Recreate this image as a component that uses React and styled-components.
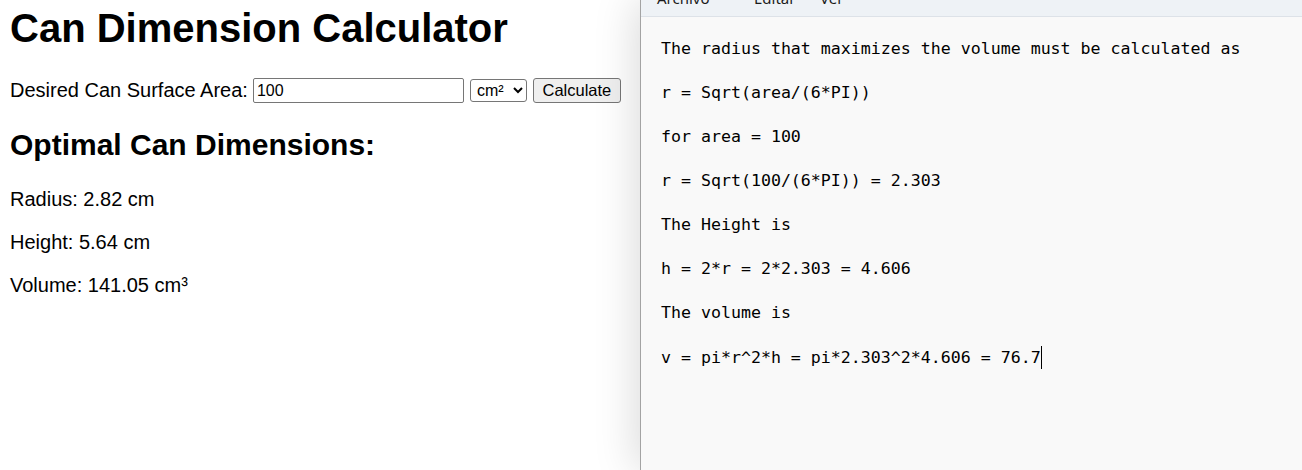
import React from "react";
import styled, { createGlobalStyle } from "styled-components";

const GlobalStyle = createGlobalStyle`
  html, body {
    margin: 0;
    padding: 0;
    background: #fff;
  }
  body {
    font-family: "Liberation Sans", Arial, sans-serif;
    color: #000;
  }
`;

const menu = [
  { label: "Archivo", width: 97 },
  { label: "Editar", width: 66 },
  { label: "Ver", width: 40 },
];

const notes = [
  "The radius that maximizes the volume must be calculated as",
  "r = Sqrt(area/(6*PI))",
  "for area = 100",
  "r = Sqrt(100/(6*PI)) = 2.303",
  "The Height is",
  "h = 2*r = 2*2.303 = 4.606",
  "The volume is",
  "v = pi*r^2*h = pi*2.303^2*4.606 = 76.7",
];

const results = [
  "Radius: 2.82 cm",
  "Height: 5.64 cm",
  "Volume: 141.05 cm³",
];

const App = () => {
  return (
    <>
      <GlobalStyle />
      <Screen>
        <Page>
          <Title>Can Dimension Calculator</Title>
          <FormRow>
            <Label htmlFor="area">Desired Can Surface Area:</Label>
            <AreaInput id="area" type="text" defaultValue="100" />
            <UnitSelect defaultValue="cm2">
              <option value="cm2">cm²</option>
              <option value="m2">m²</option>
            </UnitSelect>
            <CalcButton type="button">Calculate</CalcButton>
          </FormRow>
          <Subtitle>Optimal Can Dimensions:</Subtitle>
          {results.map((r) => (
            <Result key={r}>{r}</Result>
          ))}
        </Page>
        <Notepad>
          <MenuBar>
            {menu.map((m) => (
              <MenuItem key={m.label} $w={m.width}>
                {m.label}
              </MenuItem>
            ))}
          </MenuBar>
          <Editor>
            {notes.map((line, i) => (
              <NoteLine key={i}>
                {line}
                {i === notes.length - 1 && <Caret />}
              </NoteLine>
            ))}
          </Editor>
        </Notepad>
      </Screen>
    </>
  );
};

export default App;

const Screen = styled.div`
  display: flex;
  width: 1302px;
  height: 470px;
  overflow: hidden;
`;

const Page = styled.div`
  width: 640px;
  flex-shrink: 0;
  padding: 6px 0 0 10px;
  box-sizing: border-box;
`;

const Title = styled.h1`
  font-size: 40px;
  font-weight: 700;
  margin: 0 0 27px;
`;

const FormRow = styled.div`
  display: flex;
  align-items: center;
  height: 25px;
  gap: 6px;
`;

const Label = styled.label`
  font-size: 20px;
  margin-right: -1px;
`;

const AreaInput = styled.input`
  width: 211px;
  height: 25px;
  box-sizing: border-box;
  border: 1px solid #767676;
  border-radius: 2px;
  padding: 0 3px;
  font-family: "Liberation Sans", Arial, sans-serif;
  font-size: 16px;
  color: #000;
  outline: none;
`;

const UnitSelect = styled.select`
  width: 57px;
  height: 23px;
  box-sizing: border-box;
  border: 1px solid #767676;
  border-radius: 3px;
  padding: 0 2px;
  font-family: "Liberation Sans", Arial, sans-serif;
  font-size: 16px;
  color: #000;
  background: #fff;
`;

const CalcButton = styled.button`
  width: 88px;
  height: 25px;
  box-sizing: border-box;
  border: 1px solid #767676;
  border-radius: 3px;
  background: #efefef;
  padding: 0;
  font-family: "Liberation Sans", Arial, sans-serif;
  font-size: 16.5px;
  color: #000;
`;

const Subtitle = styled.h2`
  font-size: 30px;
  font-weight: 700;
  margin: 25px 0 26px;
`;

const Result = styled.p`
  font-size: 20px;
  margin: 0 0 20px;
`;

const Notepad = styled.div`
  flex: 1;
  display: flex;
  flex-direction: column;
  border-left: 1px solid #a3a3a3;
  background: #f9f9f9;
  box-shadow: -4px 0 40px rgba(0, 0, 0, 0.15);
`;

const MenuBar = styled.div`
  height: 16px;
  display: flex;
  padding-left: 16px;
  background: #eef2f6;
  border-bottom: 1px solid #dde2e8;
  overflow: hidden;
`;

const MenuItem = styled.span`
  width: ${(p) => p.$w}px;
  flex-shrink: 0;
  font-family: "Noto Sans", "Open Sans", sans-serif;
  font-size: 15px;
  line-height: 20px;
  margin-top: -12px;
  color: #1b1b1b;
`;

const Editor = styled.div`
  flex: 1;
  padding: 21px 20px;
  font-family: "DejaVu Sans Mono", "Liberation Mono", monospace;
  font-size: 16.6px;
  line-height: 22px;
  color: #000;
`;

const NoteLine = styled.div`
  white-space: pre;
  margin-bottom: 22px;
`;

const Caret = styled.span`
  display: inline-block;
  width: 0;
  height: 23px;
  border-left: 1px solid #000;
  vertical-align: -6px;
`;
